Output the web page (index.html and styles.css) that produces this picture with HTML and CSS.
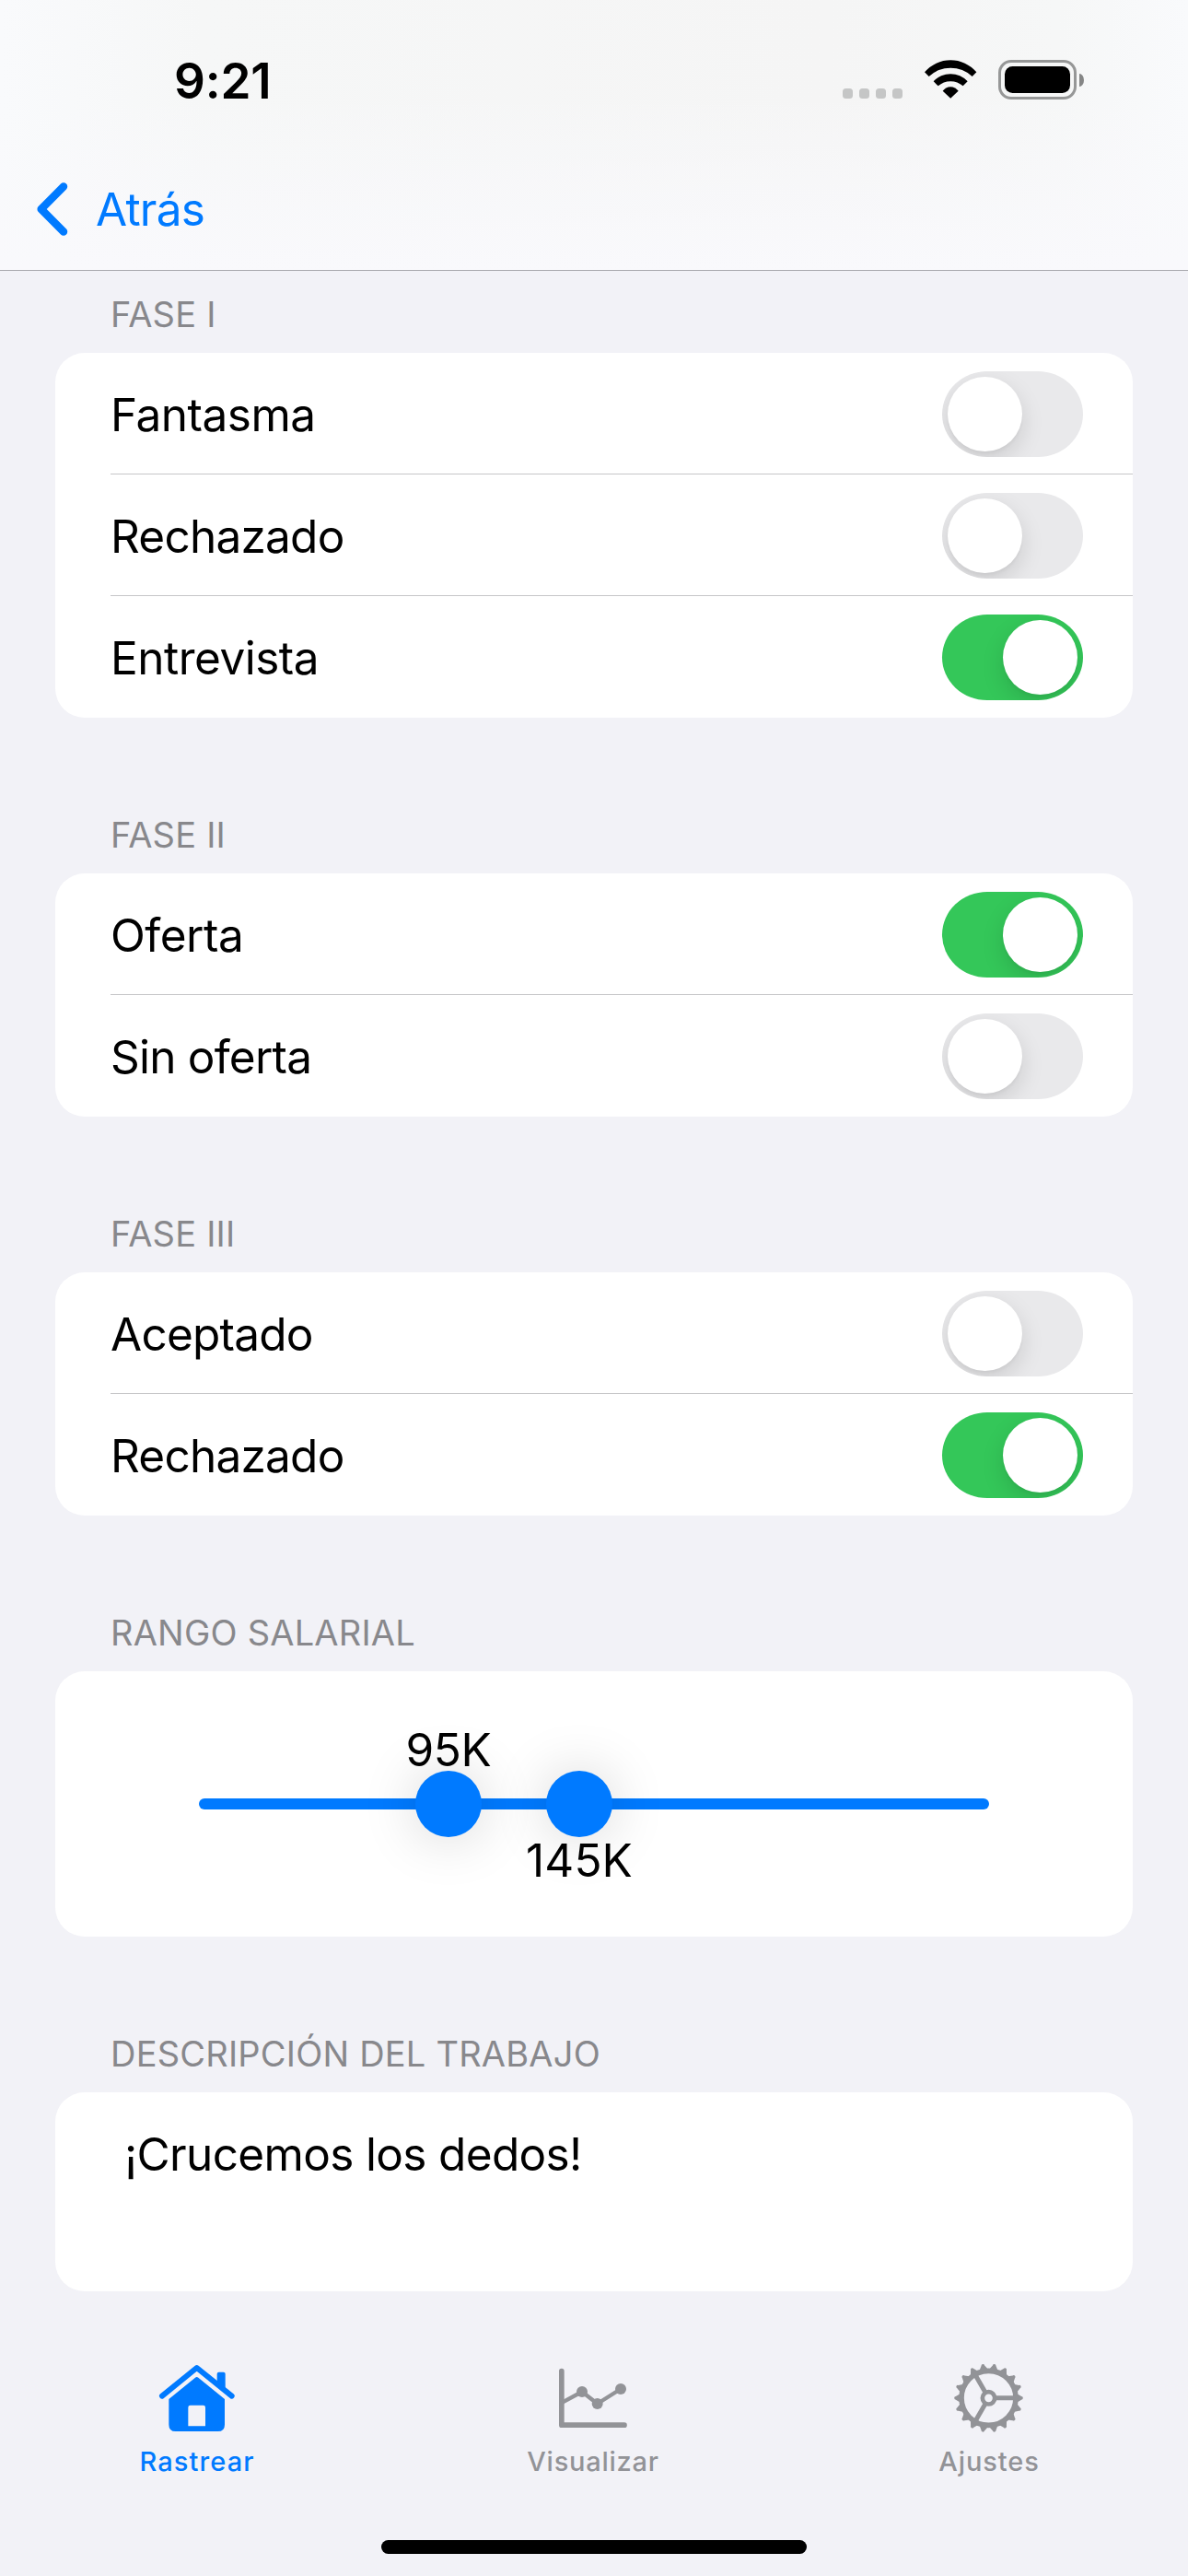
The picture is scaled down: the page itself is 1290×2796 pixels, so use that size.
FILE: index.html
```html
<!DOCTYPE html>
<html lang="es">
<head>
<meta charset="utf-8">
<title>Rastrear</title>
<link rel="stylesheet" href="styles.css">
</head>
<body>
<div class="screen">
  <header class="header">
    <div class="status">
      <div class="time">9:21</div>
      <div class="indicators">
        <div class="signal"><i></i><i></i><i></i><i></i></div>
        <svg class="wifi" viewBox="430 105 174 126">
          <path d="M433 145A111 111 0 0 1 602 145L588 159A103 103 0 0 0 447 159Z"/>
          <path d="M462 175A75 75 0 0 1 573 175L558 190A61 61 0 0 0 477 190Z"/>
          <path d="M492 206A31 31 0 0 1 543 206L517.500 230Z"/>
        </svg>
        <div class="battery"><div class="battery-body"><div class="battery-level"></div></div><div class="battery-cap"></div></div>
      </div>
    </div>
    <nav class="nav">
      <svg class="chevron" viewBox="0 0 34 58"><path d="M29 4.500L4.700 29L29 53.500"/></svg>
      <span class="back">Atrás</span>
    </nav>
  </header>

  <main class="form">
    <section class="section">
      <h2 class="heading">FASE I</h2>
      <div class="card">
        <div class="row"><span>Fantasma</span><div class="toggle"><div class="knob"></div></div></div>
        <div class="row"><span class="tight">Rechazado</span><div class="toggle"><div class="knob"></div></div></div>
        <div class="row"><span>Entrevista</span><div class="toggle on"><div class="knob"></div></div></div>
      </div>
    </section>
    <section class="section">
      <h2 class="heading">FASE II</h2>
      <div class="card">
        <div class="row"><span>Oferta</span><div class="toggle on"><div class="knob"></div></div></div>
        <div class="row"><span class="tight">Sin oferta</span><div class="toggle"><div class="knob"></div></div></div>
      </div>
    </section>
    <section class="section">
      <h2 class="heading">FASE III</h2>
      <div class="card">
        <div class="row"><span class="tight">Aceptado</span><div class="toggle"><div class="knob"></div></div></div>
        <div class="row"><span class="tight">Rechazado</span><div class="toggle on"><div class="knob"></div></div></div>
      </div>
    </section>
    <section class="section">
      <h2 class="heading">RANGO SALARIAL</h2>
      <div class="card range">
        <div class="track">
          <div class="thumb low"><span class="value">95K</span></div>
          <div class="thumb high"><span class="value">145K</span></div>
        </div>
      </div>
    </section>
    <section class="section">
      <h2 class="heading">DESCRIPCIÓN DEL TRABAJO</h2>
      <div class="card notes">¡Crucemos los dedos!</div>
    </section>
  </main>

  <footer class="tabbar">
    <div class="tabs">
      <div class="tab active">
        <svg class="icon" viewBox="210 120 270 240">
          <path class="line" stroke-width="18" d="M228 242L341 150L455 242"/>
          <path d="M407 200V170q0-6 6-6h15q6 0 6 6V222Z"/>
          <path fill-rule="evenodd" d="M336 182q5-4 10 0L432 252V335q0 22-22 22H272q-22 0-22-22V252ZM320 272q-7 0-7 7V340H369V279q0-7-7-7Z"/>
        </svg>
        <span>Rastrear</span>
      </div>
      <div class="tab">
        <svg class="icon" viewBox="180 120 270 240">
          <path class="line" stroke-width="17" d="M209.500 161V336.500H414"/>
          <path class="line" stroke-width="13" d="M213 262L276 228L326 267L402 219"/>
          <circle cx="276" cy="228" r="18"/><circle cx="326" cy="267" r="18"/><circle cx="402" cy="219" r="18"/>
        </svg>
        <span class="wide">Visualizar</span>
      </div>
      <div class="tab">
        <svg class="icon" viewBox="150 120 270 240">
          <defs>
            <path id="tooth" d="M92-14L98-11L107-5.500Q112-5 112 0Q112 5 107 5.500L98 11L92 14Z"/>
            <g id="teeth"><use href="#tooth"/><use href="#tooth" transform="rotate(20)"/><use href="#tooth" transform="rotate(40)"/></g>
          </defs>
          <g transform="translate(280.500 248.500)">
            <use href="#teeth"/><use href="#teeth" transform="rotate(60)"/><use href="#teeth" transform="rotate(120)"/>
            <use href="#teeth" transform="rotate(180)"/><use href="#teeth" transform="rotate(240)"/><use href="#teeth" transform="rotate(300)"/>
            <circle class="line" r="88.500" stroke-width="17"/>
            <circle class="line" r="20" stroke-width="14"/>
            <path class="line spoke" stroke-width="15" d="M22 0H86M-11-19.100L-43-74.500M-11 19.100L-43 74.500"/>
          </g>
        </svg>
        <span>Ajustes</span>
      </div>
    </div>
    <div class="home-indicator"></div>
  </footer>
</div>
</body>
</html>
```
FILE: styles.css
```css
* { box-sizing: border-box; }

body {
  margin: 0;
  background: #f2f2f7;
  color: #000;
  font-family: Inter, "Liberation Sans", sans-serif;
  font-size: 49.5px;
  letter-spacing: -0.01em;
}

.screen {
  width: 1290px;
  height: 2796px;
  display: flex;
  flex-direction: column;
  overflow: hidden;
}

/* Header */
.header {
  height: 294px;
  flex: none;
  border-bottom: 1px solid #a8a8ad;
  background:
    linear-gradient(to bottom, rgba(249, 249, 252, 0) 35%, #f9f9fc 100%),
    linear-gradient(to right, #f9fafc 0, #f6f7f7 220px, #f5f5f5 900px, #f6f7f7 1150px, #f9fafc 1290px);
}
.status {
  height: 176px;
  padding: 0 113px 0 189px;
  display: flex;
  justify-content: space-between;
  align-items: center;
}
.time { font-size: 53px; font-weight: 600; letter-spacing: -0.003em; }
.indicators {
  height: 43px;
  margin-bottom: 3px;
  display: flex;
  align-items: flex-end;
}
.signal { display: flex; gap: 7px; margin: 0 23px 1px 0; }
.signal i { width: 11px; height: 11px; border-radius: 3.5px; background: #c5c6c6; }
.wifi { width: 58px; height: 42px; margin: 0 23px 1px 0; }
.battery { display: flex; align-items: center; gap: 3px; }
.battery-body {
  width: 85px;
  height: 43px;
  padding: 4px;
  border: 3px solid #969797;
  border-radius: 14px;
}
.battery-level { height: 100%; border-radius: 8.5px; background: #000; }
.battery-cap { width: 5px; height: 14px; border-radius: 0 5px 5px 0 / 0 7px 7px 0; background: #858686; }

.nav {
  height: 102px;
  padding-left: 40px;
  display: flex;
  align-items: center;
  gap: 30px;
  color: #007aff;
}
.chevron { width: 34px; height: 58px; }
.chevron path { fill: none; stroke: #007aff; stroke-width: 8.5; stroke-linecap: round; stroke-linejoin: round; }
.back { letter-spacing: -0.016em; }

/* Form */
.form { padding: 22px 60px 0; display: flex; flex-direction: column; gap: 102px; }
.heading {
  margin: 0;
  padding: 0 60px 17px;
  font-size: 38px;
  line-height: 50px;
  font-weight: 400;
  letter-spacing: 0.0055em;
  color: #88888c;
}
.card { background: #fff; border-radius: 32px; padding-left: 60px; overflow: hidden; }
.row {
  height: 132px;
  padding: 2px 54px 0 0;
  display: flex;
  justify-content: space-between;
  align-items: center;
  border-bottom: 1px solid #c6c6c8;
}
.row:last-child { border-bottom-color: transparent; }
.tight { letter-spacing: -0.0155em; }

.toggle {
  width: 153px;
  height: 93px;
  padding: 6px;
  display: flex;
  border-radius: 49px / 46.5px;
  background: #e9e9eb;
  overflow: hidden;
}
.toggle.on { background: #34c759; justify-content: flex-end; }
.knob {
  width: 81px;
  height: 81px;
  border-radius: 50%;
  background: #fff;
  box-shadow: 0 9px 24px rgba(0, 0, 0, 0.13), 0 3px 3px rgba(0, 0, 0, 0.03);
}

/* Salary range */
.range { height: 288px; padding: 0; display: flex; align-items: center; justify-content: center; }
.track { position: relative; width: 858px; height: 12px; border-radius: 6px; background: #007aff; }
.thumb {
  position: absolute;
  top: -30px;
  width: 72px;
  height: 72px;
  display: flex;
  align-items: center;
  justify-content: center;
  border-radius: 50%;
  background: #007aff;
  box-shadow: 0 1px 60px rgba(0, 0, 0, 0.17);
}
.low { left: 235px; }
.high { left: 377px; }
.value { position: absolute; line-height: 60px; letter-spacing: -0.006em; }
.low .value { top: -53px; }
.high .value { top: 67px; letter-spacing: 0.003em; }

.notes { height: 216px; padding: 37px 75px 0; line-height: 60px; letter-spacing: -0.0133em; }

/* Tab bar */
.tabbar { margin-top: 73px; display: flex; flex-direction: column; align-items: center; gap: 67px; }
.tabs { width: 100%; display: flex; }
.tab {
  flex: 1;
  display: flex;
  flex-direction: column;
  align-items: center;
  gap: 14px;
  font-size: 29px;
  line-height: 36px;
  font-weight: 500;
  letter-spacing: 0.03em;
  color: #929397;
}
.tab span { margin-right: 2px; }
.tab.active { color: #007aff; letter-spacing: 0.038em; }
.tab .wide { letter-spacing: 0.026em; }
.icon { width: 90px; height: 80px; fill: currentColor; }
.line { fill: none; stroke: currentColor; stroke-linecap: round; stroke-linejoin: round; }
.spoke { stroke-linecap: butt; }
.home-indicator { width: 462px; height: 15px; border-radius: 8px; background: #000; }
```
